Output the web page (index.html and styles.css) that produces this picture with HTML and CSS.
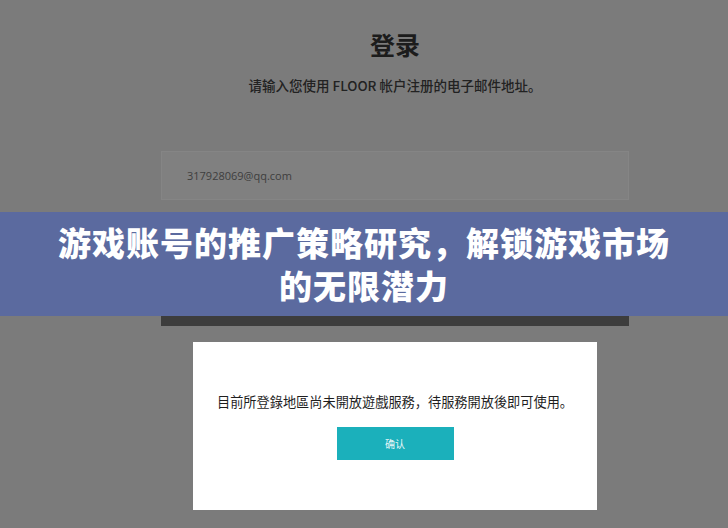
FILE: index.html
```html
<!DOCTYPE html>
<html lang="zh-CN">
<head>
<meta charset="UTF-8">
<meta name="viewport" content="width=device-width, initial-scale=1.0">
<title>游戏账号的推广策略研究</title>
<link rel="stylesheet" href="styles.css">
</head>
<body>
    <div class="screen">
        <div class="login">
            <h1 class="login-title">登录</h1>
            <p class="login-tip">请输入您使用 FLOOR 帐户注册的电子邮件地址。</p>
            <div class="email-box">317928069@qq.com</div>
            <div class="next-btn"></div>
        </div>

        <div class="dialog">
            <p class="dialog-text">目前所登錄地區尚未開放遊戲服務，待服務開放後即可使用。</p>
            <div class="ok-btn">确认</div>
        </div>

        <div class="banner">
            <h2>游戏账号的推广策略研究，解锁游戏市场的无限潜力</h2>
        </div>
    </div>
</body>
</html>
```

FILE: styles.css
```css
body {
    margin: 0;
    padding: 0;
    background-color: #7b7b7b;
    font-family: "Noto Sans CJK SC", "Noto Sans", sans-serif;
}
.screen {
    position: relative;
    width: 728px;
    height: 528px;
    overflow: hidden;
}
.login {
    width: 468px;
    margin-left: 161px;
    padding-top: 27px;
    display: flex;
    flex-direction: column;
    align-items: center;
}
.login-title {
    margin: 0;
    font-size: 25px;
    line-height: 34px;
    font-weight: 700;
    color: #1c1c1c;
}
.login-tip {
    margin: 14px 0 0;
    font-size: 13.5px;
    line-height: 20px;
    font-weight: 500;
    color: #222;
}
.email-box {
    align-self: stretch;
    margin-top: 56px;
    height: 49px;
    box-sizing: border-box;
    padding-left: 25px;
    display: flex;
    align-items: center;
    background-color: #808080;
    border: 1px solid #858585;
    font-family: "Open Sans", "Noto Sans", sans-serif;
    font-size: 11px;
    color: #3e3e3e;
}
.next-btn {
    align-self: stretch;
    margin-top: 80px;
    height: 46px;
    background-color: #3d3d3d;
}
.dialog {
    width: 404px;
    height: 168px;
    margin: 16px 0 0 193px;
    background-color: #fff;
    display: flex;
    flex-direction: column;
    align-items: center;
}
.dialog-text {
    margin: 51px 0 0;
    font-family: "Noto Sans CJK TC", "Noto Sans CJK SC", sans-serif;
    font-size: 13.2px;
    line-height: 18px;
    color: #1e1e1e;
}
.ok-btn {
    margin-top: 16px;
    width: 117px;
    height: 33px;
    background-color: #1bb0bb;
    color: #e8f7f8;
    font-size: 10px;
    display: flex;
    align-items: center;
    justify-content: center;
}
.banner {
    position: absolute;
    left: 0;
    top: 212px;
    width: 100%;
    height: 104px;
    box-sizing: border-box;
    padding: 9px 55px;
    background-color: #5b6a9f;
}
.banner h2 {
    margin: 0;
    text-align: center;
    color: #fff;
    font-size: 33px;
    line-height: 43px;
    font-weight: 900;
    letter-spacing: 1px;
}
```
